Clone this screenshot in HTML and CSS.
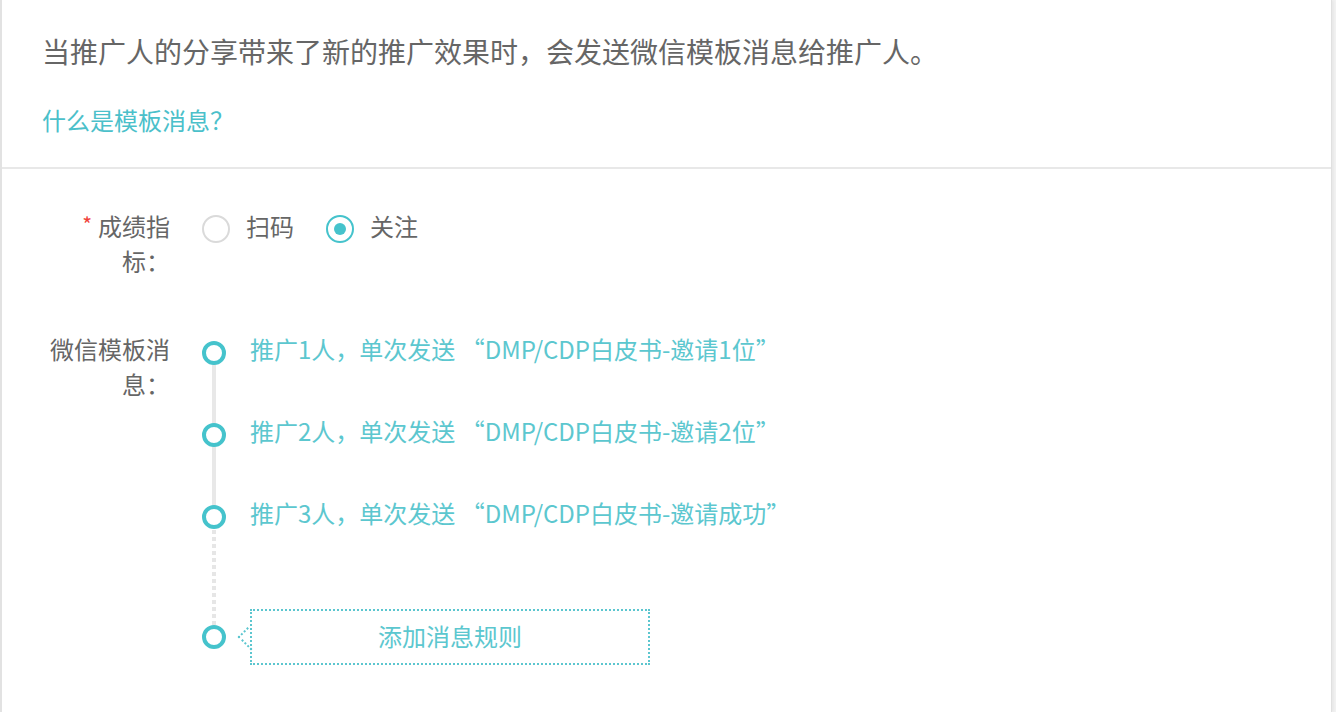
FILE: index.html
```html
<!DOCTYPE html>
<html lang="zh-CN">
<head>
<meta charset="utf-8">
<title>推广模板消息</title>
<link rel="stylesheet" href="styles.css">
</head>
<body>
<div class="card">
  <div class="intro">
    <p class="desc">当推广人的分享带来了新的推广效果时，会发送微信模板消息给推广人。</p>
    <a class="help" href="#">什么是模板消息？</a>
  </div>
  <div class="form">
    <div class="row">
      <div class="label"><span class="req">*</span>成绩指标：</div>
      <div class="control radios">
        <label class="radio"><span class="dot"></span>扫码</label>
        <label class="radio checked"><span class="dot"></span>关注</label>
      </div>
    </div>
    <div class="row row-msg">
      <div class="label">微信模板消息：</div>
      <div class="control">
        <ul class="timeline">
          <li class="item"><span class="node"></span><span class="text">推广1人，单次发送 “DMP/CDP白皮书-邀请1位”</span></li>
          <li class="item"><span class="node"></span><span class="text">推广2人，单次发送 “DMP/CDP白皮书-邀请2位”</span></li>
          <li class="item last"><span class="node"></span><span class="text">推广3人，单次发送 “DMP/CDP白皮书-邀请成功”</span></li>
          <li class="item add"><span class="node"></span><button class="add-btn" type="button">添加消息规则</button></li>
        </ul>
      </div>
    </div>
  </div>
</div>
</body>
</html>
```

FILE: styles.css
```css
html, body {
  margin: 0;
  height: 712px;
  overflow: hidden;
}
body {
  background: #f3f3f3;
  font-family: "Noto Sans CJK SC", "Liberation Sans", sans-serif;
}
.card {
  width: 1332px;
  min-height: 712px;
  box-sizing: border-box;
  background: #fff;
  border-left: 2px solid #e2e2e2;
  border-right: 1px solid #e0e0e0;
  box-shadow: 2px 0 3px rgba(0, 0, 0, 0.05);
}
.intro {
  padding: 31px 40px 30px;
  border-bottom: 2px solid #e8e8e8;
}
.desc {
  margin: 0;
  font-size: 28px;
  line-height: 40px;
  color: #666;
}
.help {
  display: block;
  margin-top: 32px;
  font-size: 24px;
  line-height: 34px;
  color: #4bc0ca;
  text-decoration: none;
}
.form {
  padding: 39px 40px 0;
}
.row {
  display: flex;
  align-items: flex-start;
}
.row-msg {
  margin-top: 53px;
}
.label {
  width: 128px;
  flex: none;
  text-align: right;
  font-size: 24px;
  line-height: 35px;
  color: #666;
}
.req {
  color: #f0413a;
  font-size: 21px;
  margin-right: 6px;
  vertical-align: top;
  line-height: 32px;
}
.control {
  margin-left: 32px;
}
.radios {
  display: flex;
  gap: 32px;
  height: 35px;
  align-items: flex-start;
}
.radio {
  display: flex;
  align-items: flex-start;
  gap: 16px;
  font-size: 24px;
  line-height: 35px;
  color: #666;
}
.dot {
  width: 28px;
  height: 28px;
  margin-top: 6.5px;
  box-sizing: border-box;
  border: 2px solid #dadada;
  border-radius: 50%;
  display: flex;
  align-items: center;
  justify-content: center;
}
.radio.checked .dot {
  border-color: #45c3cc;
}
.radio.checked .dot::after {
  content: "";
  width: 12px;
  height: 12px;
  border-radius: 50%;
  background: #45c3cc;
}
.timeline {
  list-style: none;
  margin: 0;
  padding: 0;
}
.item {
  display: flex;
  align-items: flex-start;
  gap: 24px;
  height: 35px;
  margin-bottom: 47px;
  position: relative;
}
.item::before {
  content: "";
  position: absolute;
  left: 10px;
  top: 21px;
  width: 4px;
  height: 82px;
  background: #e8e8e8;
}
.item.last {
  margin-bottom: 79px;
}
.item.last::before {
  height: 122px;
  background: repeating-linear-gradient(to bottom, #e6e6e6 0 4px, transparent 4px 7px);
}
.item.add {
  height: 56px;
  margin-bottom: 0;
  align-items: center;
}
.item.add::before {
  display: none;
}
.node {
  width: 24px;
  height: 24px;
  margin-top: 9.5px;
  flex: none;
  box-sizing: border-box;
  border: 4px solid #45c3cc;
  border-radius: 50%;
  background: #fff;
  position: relative;
  z-index: 1;
}
.item.add .node {
  margin-top: 0;
}
.text {
  font-size: 24px;
  line-height: 35px;
  color: #5cc7cf;
  white-space: nowrap;
}
.add-btn {
  position: relative;
  width: 400px;
  height: 56px;
  padding: 0 0 3px;
  box-sizing: border-box;
  border: 2px dotted #5cc6cf;
  background: #fff;
  font-family: inherit;
  font-size: 24px;
  color: #5cc7cf;
  cursor: pointer;
}
.add-btn::before {
  content: "";
  position: absolute;
  left: -1px;
  top: 50%;
  width: 17px;
  height: 17px;
  border-left: 2px dotted #5cc6cf;
  border-bottom: 2px dotted #5cc6cf;
  transform: translate(-50%, -50%) rotate(45deg);
}
```
